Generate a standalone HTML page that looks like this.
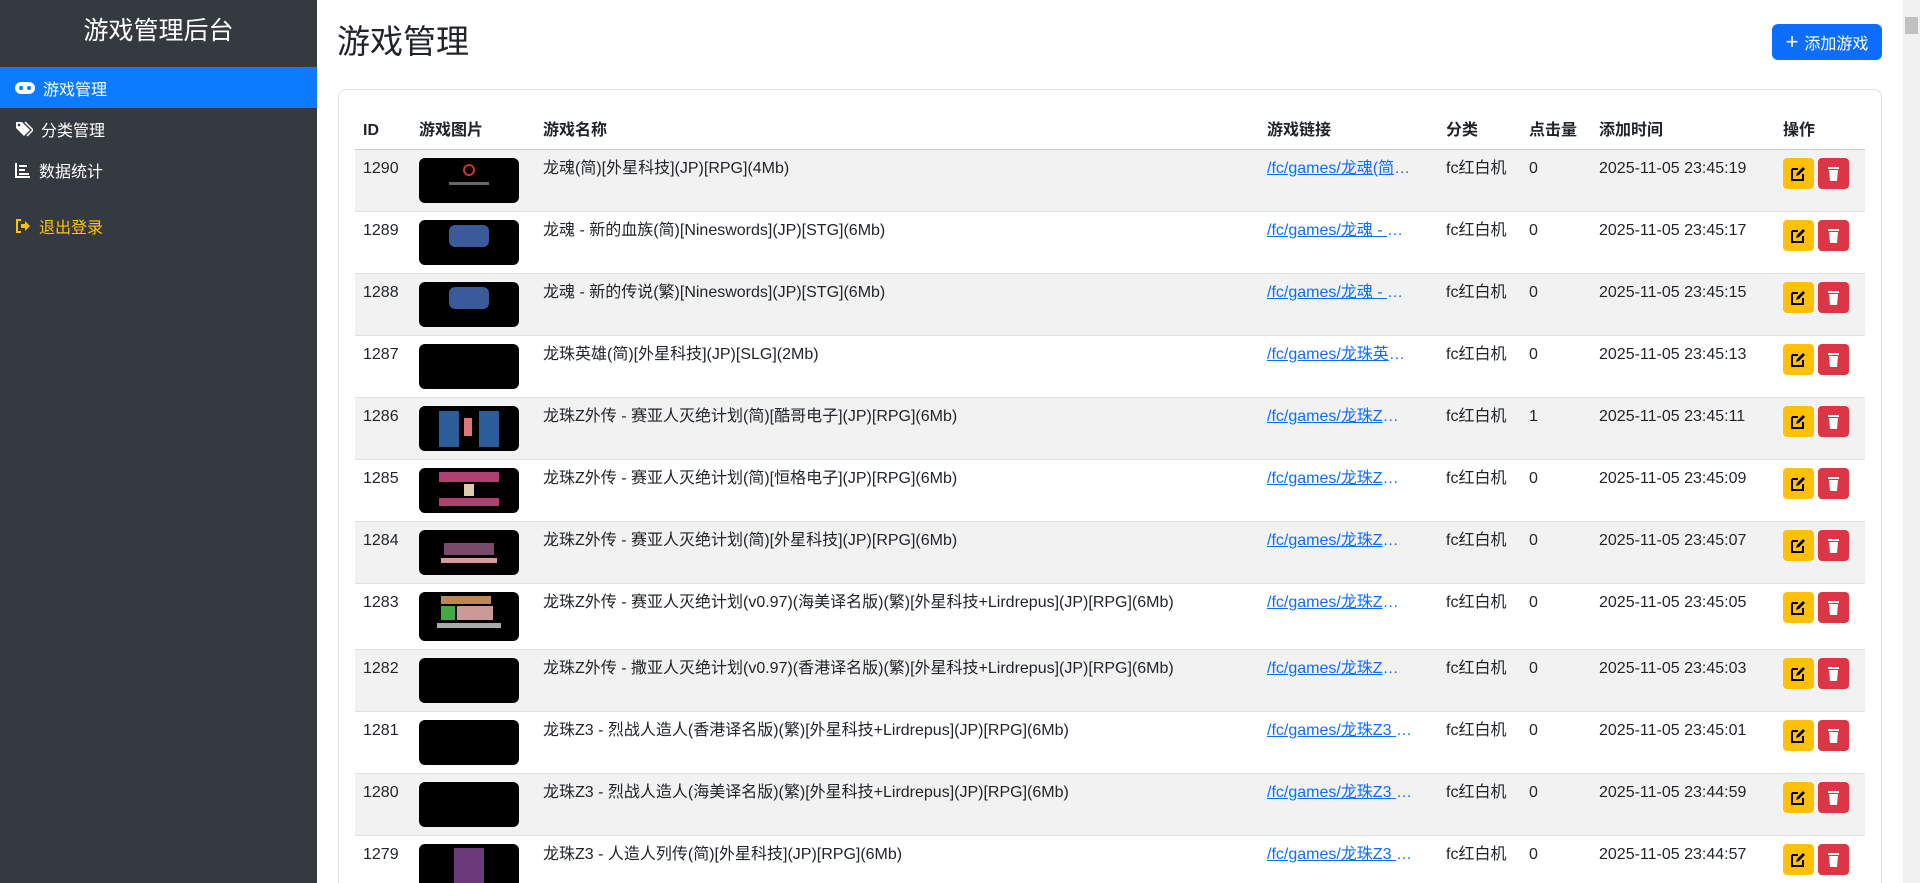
<!DOCTYPE html>
<html><head><meta charset="utf-8"><style>
*{box-sizing:border-box;margin:0;padding:0}
html,body{width:1920px;height:883px;overflow:hidden}
body{font-family:"Liberation Sans","Noto Sans CJK SC",sans-serif;color:#212529;background:#fff;position:relative;font-size:16px}
.sb{position:absolute;left:0;top:0;width:317px;height:883px;background:#343a40;color:#fff}
.sb h1{font-size:25px;font-weight:400;text-align:center;margin-top:14px;height:53px;line-height:34px}
.nav{height:41px;display:flex;align-items:center;padding-left:15px;font-size:16px;color:#fff}
.nav svg{margin-right:8px}
.act{background:#0d7bff}
.main{position:absolute;left:317px;top:0;width:1586px;height:883px;overflow:hidden}
.title{position:absolute;left:20px;top:22px;font-size:33px;font-weight:400;line-height:40px}
.add{position:absolute;left:1455px;top:24px;width:110px;height:36px;background:#0d6efd;border-radius:6px;color:#fff;font-size:16px;display:flex;align-items:center;justify-content:center}
.card{position:absolute;left:21px;top:89px;width:1544px;height:820px;border:1px solid #dee2e6;border-radius:8px}
table{position:absolute;left:16px;top:18px;width:1510px;border-collapse:collapse;table-layout:fixed}
th{text-align:left;font-weight:700;padding:8px;height:38px;border-bottom:1px solid #ccc;vertical-align:bottom;padding-bottom:9px}
td{padding:8px;vertical-align:top;border-bottom:1px solid #dee2e6;height:62px;line-height:22px}
tr.g td{background:#f2f2f2}
.th{width:100px;height:45px;background:#000;border-radius:6px;position:relative;overflow:hidden}
a{color:#0d6efd;text-decoration:underline;display:block;white-space:nowrap;overflow:hidden;text-overflow:ellipsis;width:145px}
.b{display:inline-block;width:31px;height:31px;border-radius:4px;vertical-align:top;margin-right:4px;position:relative}
.y{background:#ffc107}.r{background:#dc3545}
.b svg{position:absolute;left:8px;top:8px}
.scroll{position:absolute;left:1903px;top:0;width:17px;height:883px;background:#f1f1f1}
.scroll div{position:absolute;left:2px;top:17px;width:13px;height:17px;background:#c1c1c1}
</style></head><body>
<div class="sb">
<h1>游戏管理后台</h1>
<div class="nav act"><svg width="20" height="14" viewBox="0 0 20 14"><rect x="0" y="1" width="20" height="12" rx="6" fill="#fff"/><circle cx="6" cy="7" r="2" fill="#0d7bff"/><circle cx="14" cy="7" r="2" fill="#0d7bff"/></svg>游戏管理</div>
<div class="nav"><svg width="18" height="16" viewBox="0 0 18 16"><path d="M1 1h6l8 8-6 6-8-8z" fill="#fff"/><path d="M10 1l8 8-6 6" fill="none" stroke="#fff" stroke-width="1.5"/><circle cx="4" cy="4" r="1.3" fill="#343a40"/></svg>分类管理</div>
<div class="nav"><svg width="16" height="16" viewBox="0 0 16 16"><path d="M1 1v14h14" fill="none" stroke="#fff" stroke-width="2"/><rect x="4" y="3" width="8" height="2" fill="#fff"/><rect x="4" y="7" width="6" height="2" fill="#fff"/><rect x="4" y="11" width="10" height="2" fill="#fff"/></svg>数据统计</div>
<div class="nav" style="margin-top:15px;color:#ffc107"><svg width="16" height="16" viewBox="0 0 16 16"><path d="M6 2H2v12h4" fill="none" stroke="#ffc107" stroke-width="2"/><path d="M6 6h4V3l5 5-5 5v-3H6z" fill="#ffc107"/></svg>退出登录</div>
</div>
<div class="main">
<div class="title">游戏管理</div>
<div class="add"><span style="font-size:22px;margin-right:6px;line-height:20px">+</span>添加游戏</div>
<div class="card">
<table>
<colgroup><col style="width:56px"><col style="width:124px"><col style="width:724px"><col style="width:179px"><col style="width:83px"><col style="width:70px"><col style="width:184px"><col style="width:90px"></colgroup>
<tr><th>ID</th><th>游戏图片</th><th>游戏名称</th><th>游戏链接</th><th>分类</th><th>点击量</th><th>添加时间</th><th>操作</th></tr>
<tr class="g"><td>1290</td><td><div class="th"><div style="position:absolute;left:44px;top:6px;width:12px;height:12px;border-radius:50%;border:2px solid #c33"></div><div style="position:absolute;left:30px;top:24px;width:40px;height:3px;background:#666"></div></div></td><td>龙魂(简)[外星科技](JP)[RPG](4Mb)</td><td><a>/fc/games/龙魂(简)...</a></td><td>fc红白机</td><td>0</td><td>2025-11-05 23:45:19</td><td><span class="b y"><svg width="15" height="15" viewBox="0 0 15 15"><path d="M1 3h6M1 3v11h11V8" fill="none" stroke="#000" stroke-width="2"/><path d="M5 10l1-3 6-6 2 2-6 6z" fill="#000"/></svg></span><span class="b r"><svg width="15" height="15" viewBox="0 0 15 15"><rect x="2" y="1" width="11" height="2" fill="#fff"/><path d="M3 4h9l-1 11H4z" fill="#fff"/></svg></span></td></tr>
<tr><td>1289</td><td><div class="th"><div style="position:absolute;left:30px;top:5px;width:40px;height:22px;background:#3a5a9a;border-radius:6px"></div></div></td><td>龙魂 - 新的血族(简)[Nineswords](JP)[STG](6Mb)</td><td><a>/fc/games/龙魂 - 新的</a></td><td>fc红白机</td><td>0</td><td>2025-11-05 23:45:17</td><td><span class="b y"><svg width="15" height="15" viewBox="0 0 15 15"><path d="M1 3h6M1 3v11h11V8" fill="none" stroke="#000" stroke-width="2"/><path d="M5 10l1-3 6-6 2 2-6 6z" fill="#000"/></svg></span><span class="b r"><svg width="15" height="15" viewBox="0 0 15 15"><rect x="2" y="1" width="11" height="2" fill="#fff"/><path d="M3 4h9l-1 11H4z" fill="#fff"/></svg></span></td></tr>
<tr class="g"><td>1288</td><td><div class="th"><div style="position:absolute;left:30px;top:5px;width:40px;height:22px;background:#3a5a9a;border-radius:6px"></div></div></td><td>龙魂 - 新的传说(繁)[Nineswords](JP)[STG](6Mb)</td><td><a>/fc/games/龙魂 - 新的</a></td><td>fc红白机</td><td>0</td><td>2025-11-05 23:45:15</td><td><span class="b y"><svg width="15" height="15" viewBox="0 0 15 15"><path d="M1 3h6M1 3v11h11V8" fill="none" stroke="#000" stroke-width="2"/><path d="M5 10l1-3 6-6 2 2-6 6z" fill="#000"/></svg></span><span class="b r"><svg width="15" height="15" viewBox="0 0 15 15"><rect x="2" y="1" width="11" height="2" fill="#fff"/><path d="M3 4h9l-1 11H4z" fill="#fff"/></svg></span></td></tr>
<tr><td>1287</td><td><div class="th"></div></td><td>龙珠英雄(简)[外星科技](JP)[SLG](2Mb)</td><td><a>/fc/games/龙珠英雄(简)</a></td><td>fc红白机</td><td>0</td><td>2025-11-05 23:45:13</td><td><span class="b y"><svg width="15" height="15" viewBox="0 0 15 15"><path d="M1 3h6M1 3v11h11V8" fill="none" stroke="#000" stroke-width="2"/><path d="M5 10l1-3 6-6 2 2-6 6z" fill="#000"/></svg></span><span class="b r"><svg width="15" height="15" viewBox="0 0 15 15"><rect x="2" y="1" width="11" height="2" fill="#fff"/><path d="M3 4h9l-1 11H4z" fill="#fff"/></svg></span></td></tr>
<tr class="g"><td>1286</td><td><div class="th"><div style="position:absolute;left:20px;top:5px;width:20px;height:36px;background:#2a5d9a"></div><div style="position:absolute;left:60px;top:5px;width:20px;height:36px;background:#2a5d9a"></div><div style="position:absolute;left:45px;top:12px;width:8px;height:18px;background:#d77"></div></div></td><td>龙珠Z外传 - 赛亚人灭绝计划(简)[酷哥电子](JP)[RPG](6Mb)</td><td><a>/fc/games/龙珠Z外传</a></td><td>fc红白机</td><td>1</td><td>2025-11-05 23:45:11</td><td><span class="b y"><svg width="15" height="15" viewBox="0 0 15 15"><path d="M1 3h6M1 3v11h11V8" fill="none" stroke="#000" stroke-width="2"/><path d="M5 10l1-3 6-6 2 2-6 6z" fill="#000"/></svg></span><span class="b r"><svg width="15" height="15" viewBox="0 0 15 15"><rect x="2" y="1" width="11" height="2" fill="#fff"/><path d="M3 4h9l-1 11H4z" fill="#fff"/></svg></span></td></tr>
<tr><td>1285</td><td><div class="th"><div style="position:absolute;left:20px;top:4px;width:60px;height:10px;background:#b04070"></div><div style="position:absolute;left:20px;top:30px;width:60px;height:8px;background:#b04070"></div><div style="position:absolute;left:45px;top:16px;width:10px;height:12px;background:#dca"></div></div></td><td>龙珠Z外传 - 赛亚人灭绝计划(简)[恒格电子](JP)[RPG](6Mb)</td><td><a>/fc/games/龙珠Z外传</a></td><td>fc红白机</td><td>0</td><td>2025-11-05 23:45:09</td><td><span class="b y"><svg width="15" height="15" viewBox="0 0 15 15"><path d="M1 3h6M1 3v11h11V8" fill="none" stroke="#000" stroke-width="2"/><path d="M5 10l1-3 6-6 2 2-6 6z" fill="#000"/></svg></span><span class="b r"><svg width="15" height="15" viewBox="0 0 15 15"><rect x="2" y="1" width="11" height="2" fill="#fff"/><path d="M3 4h9l-1 11H4z" fill="#fff"/></svg></span></td></tr>
<tr class="g"><td>1284</td><td><div class="th"><div style="position:absolute;left:25px;top:13px;width:50px;height:12px;background:#7a4a6a"></div><div style="position:absolute;left:22px;top:28px;width:56px;height:5px;background:#d99"></div></div></td><td>龙珠Z外传 - 赛亚人灭绝计划(简)[外星科技](JP)[RPG](6Mb)</td><td><a>/fc/games/龙珠Z外传</a></td><td>fc红白机</td><td>0</td><td>2025-11-05 23:45:07</td><td><span class="b y"><svg width="15" height="15" viewBox="0 0 15 15"><path d="M1 3h6M1 3v11h11V8" fill="none" stroke="#000" stroke-width="2"/><path d="M5 10l1-3 6-6 2 2-6 6z" fill="#000"/></svg></span><span class="b r"><svg width="15" height="15" viewBox="0 0 15 15"><rect x="2" y="1" width="11" height="2" fill="#fff"/><path d="M3 4h9l-1 11H4z" fill="#fff"/></svg></span></td></tr>
<tr><td style="height:66px">1283</td><td><div class="th" style="height:49px"><div style="position:absolute;left:22px;top:4px;width:50px;height:8px;background:#b85"></div><div style="position:absolute;left:22px;top:14px;width:14px;height:14px;background:#4a4"></div><div style="position:absolute;left:38px;top:14px;width:36px;height:14px;background:#c99"></div><div style="position:absolute;left:18px;top:31px;width:64px;height:5px;background:#aaa"></div></div></td><td>龙珠Z外传 - 赛亚人灭绝计划(v0.97)(海美译名版)(繁)[外星科技+Lirdrepus](JP)[RPG](6Mb)</td><td><a>/fc/games/龙珠Z外传</a></td><td>fc红白机</td><td>0</td><td>2025-11-05 23:45:05</td><td><span class="b y"><svg width="15" height="15" viewBox="0 0 15 15"><path d="M1 3h6M1 3v11h11V8" fill="none" stroke="#000" stroke-width="2"/><path d="M5 10l1-3 6-6 2 2-6 6z" fill="#000"/></svg></span><span class="b r"><svg width="15" height="15" viewBox="0 0 15 15"><rect x="2" y="1" width="11" height="2" fill="#fff"/><path d="M3 4h9l-1 11H4z" fill="#fff"/></svg></span></td></tr>
<tr class="g"><td>1282</td><td><div class="th"></div></td><td>龙珠Z外传 - 撒亚人灭绝计划(v0.97)(香港译名版)(繁)[外星科技+Lirdrepus](JP)[RPG](6Mb)</td><td><a>/fc/games/龙珠Z外传</a></td><td>fc红白机</td><td>0</td><td>2025-11-05 23:45:03</td><td><span class="b y"><svg width="15" height="15" viewBox="0 0 15 15"><path d="M1 3h6M1 3v11h11V8" fill="none" stroke="#000" stroke-width="2"/><path d="M5 10l1-3 6-6 2 2-6 6z" fill="#000"/></svg></span><span class="b r"><svg width="15" height="15" viewBox="0 0 15 15"><rect x="2" y="1" width="11" height="2" fill="#fff"/><path d="M3 4h9l-1 11H4z" fill="#fff"/></svg></span></td></tr>
<tr><td>1281</td><td><div class="th"></div></td><td>龙珠Z3 - 烈战人造人(香港译名版)(繁)[外星科技+Lirdrepus](JP)[RPG](6Mb)</td><td><a>/fc/games/龙珠Z3 - 烈</a></td><td>fc红白机</td><td>0</td><td>2025-11-05 23:45:01</td><td><span class="b y"><svg width="15" height="15" viewBox="0 0 15 15"><path d="M1 3h6M1 3v11h11V8" fill="none" stroke="#000" stroke-width="2"/><path d="M5 10l1-3 6-6 2 2-6 6z" fill="#000"/></svg></span><span class="b r"><svg width="15" height="15" viewBox="0 0 15 15"><rect x="2" y="1" width="11" height="2" fill="#fff"/><path d="M3 4h9l-1 11H4z" fill="#fff"/></svg></span></td></tr>
<tr class="g"><td>1280</td><td><div class="th"></div></td><td>龙珠Z3 - 烈战人造人(海美译名版)(繁)[外星科技+Lirdrepus](JP)[RPG](6Mb)</td><td><a>/fc/games/龙珠Z3 - 烈</a></td><td>fc红白机</td><td>0</td><td>2025-11-05 23:44:59</td><td><span class="b y"><svg width="15" height="15" viewBox="0 0 15 15"><path d="M1 3h6M1 3v11h11V8" fill="none" stroke="#000" stroke-width="2"/><path d="M5 10l1-3 6-6 2 2-6 6z" fill="#000"/></svg></span><span class="b r"><svg width="15" height="15" viewBox="0 0 15 15"><rect x="2" y="1" width="11" height="2" fill="#fff"/><path d="M3 4h9l-1 11H4z" fill="#fff"/></svg></span></td></tr>
<tr><td>1279</td><td><div class="th"><div style="position:absolute;left:35px;top:4px;width:30px;height:36px;background:#6a3a7a"></div></div></td><td>龙珠Z3 - 人造人列传(简)[外星科技](JP)[RPG](6Mb)</td><td><a>/fc/games/龙珠Z3 - 人</a></td><td>fc红白机</td><td>0</td><td>2025-11-05 23:44:57</td><td><span class="b y"><svg width="15" height="15" viewBox="0 0 15 15"><path d="M1 3h6M1 3v11h11V8" fill="none" stroke="#000" stroke-width="2"/><path d="M5 10l1-3 6-6 2 2-6 6z" fill="#000"/></svg></span><span class="b r"><svg width="15" height="15" viewBox="0 0 15 15"><rect x="2" y="1" width="11" height="2" fill="#fff"/><path d="M3 4h9l-1 11H4z" fill="#fff"/></svg></span></td></tr>
</table>
</div>
</div>
<div class="scroll"><div></div></div>
</body></html>
